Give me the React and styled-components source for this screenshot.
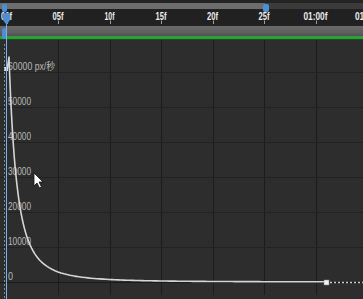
import React from "react";
import styled, { createGlobalStyle } from "styled-components";

const Global = createGlobalStyle`
  html, body { margin: 0; padding: 0; background: #2c2c2c; }
  #root { width: 363px; height: 299px; overflow: hidden; }
`;

const Panel = styled.div`
  position: relative;
  width: 363px;
  height: 299px;
  display: flex;
  flex-direction: column;
  background: #2c2c2c;
  overflow: hidden;
  font-family: "Liberation Sans", Arial, sans-serif;
`;

const TopStrip = styled.div`
  height: 4px;
  background: #242424;
`;

const Navigator = styled.div`
  height: 7px;
  display: flex;
`;

const NavSegment = styled.div`
  height: 100%;
  width: ${(p) => (p.$w ? `${p.$w}px` : "auto")};
  flex: ${(p) => (p.$w ? "none" : "1")};
  background: ${(p) => p.$bg};
`;

const Ruler = styled.div`
  height: 17px;
  background: #212121;
`;

const WorkArea = styled.div`
  height: 12px;
  background: linear-gradient(#6a6a6a, #5e5e5e 70%, #505050);
`;

const GreenBar = styled.div`
  height: 3px;
  background: #2f9e3a;
  border-bottom: 1px solid #174d1c;
`;

const Graph = styled.div`
  flex: 1;
  background: #2d2d2d;
`;

const Overlay = styled.svg`
  position: absolute;
  left: 0;
  top: 0;
  pointer-events: none;
`;

const Handle = styled.div`
  position: absolute;
  left: ${(p) => p.$x}px;
  top: ${(p) => p.$y}px;
  width: ${(p) => p.$w}px;
  height: ${(p) => p.$h}px;
  border-radius: 2px;
  background: #4b8fd6;
`;

const FRAME0 = 6.5;
const STEP = 51.5;

const rulerLabels = [
  { t: "00f", w: 11 },
  { t: "05f", w: 11 },
  { t: "10f", w: 10 },
  { t: "15f", w: 11 },
  { t: "20f", w: 11 },
  { t: "25f", w: 11 },
  { t: "01:00f", w: 24 },
  { t: "01:05f", w: 24 },
];
const gridValues = [60000, 50000, 40000, 30000, 20000, 10000, 0];
const lineY = (i) => 32 + i * 35; // relative to graph top (43)

function buildCurve() {
  const A = 64286;
  const b = 0.0502;
  const pts = ["M7 30", "L9 17"];
  for (let x = 9; x <= 326; x += x < 40 ? 0.5 : 3) {
    const v = A / Math.pow(1 + b * (x - 9), 2.5);
    const y = 242 - (v / 10000) * 35;
    pts.push(`L${x.toFixed(1)} ${y.toFixed(2)}`);
  }
  pts.push("L326 242");
  return pts.join(" ");
}

function labelWidth(i) {
  if (i === 0) return 47;
  if (i === 6) return 5;
  return 23;
}

export default function App() {
  const curve = buildCurve();
  return (
    <>
      <Global />
      <Panel>
        <TopStrip />
        <Navigator>
          <NavSegment $w={265} $bg="#6d6d6d" />
          <NavSegment $bg="#3b3b3b" />
        </Navigator>
        <Ruler>
          <svg width="363" height="17">
            {rulerLabels.map((l, i) => {
              const x = FRAME0 + STEP * i;
              return (
                <g key={l.t}>
                  <text
                    x={x - l.w / 2}
                    y="10.8"
                    textLength={l.w}
                    lengthAdjust="spacingAndGlyphs"
                    fill="#ececec"
                    fontSize="10.5"
                    fontWeight="bold"
                    fontFamily="'Liberation Sans', Arial, sans-serif"
                  >
                    {l.t}
                  </text>
                  <line x1={Math.round(x) + 0.5} x2={Math.round(x) + 0.5} y1="11.5" y2="15" stroke="#a0a0a0" />
                </g>
              );
            })}
          </svg>
        </Ruler>
        <WorkArea />
        <GreenBar />
        <Graph>
          <svg width="363" height="255">
            {[1, 2, 3, 4, 5, 6].map((k) => {
              const x = Math.round(FRAME0 + STEP * k) + 0.5;
              return <line key={k} x1={x} x2={x} y1="0" y2="255" stroke="#1c1c1c" />;
            })}
            {gridValues.map((v, i) => (
              <line
                key={v}
                x1="0"
                x2="363"
                y1={lineY(i) + 0.5}
                y2={lineY(i) + 0.5}
                stroke={v === 0 ? "#1a1a1a" : "#222222"}
              />
            ))}
            {gridValues.map((v, i) => (
              <text
                key={"t" + v}
                x="8"
                y={lineY(i) - 2.5}
                textLength={labelWidth(i)}
                lengthAdjust="spacingAndGlyphs"
                fill="#b8b8b8"
                fontSize="10"
                fontFamily="'Liberation Sans', 'Noto Sans CJK JP', sans-serif"
              >
                {i === 0 ? "60000 px/秒" : String(v)}
              </text>
            ))}
            <path d={curve} fill="none" stroke="#d6d6d6" strokeWidth="1.6" strokeLinejoin="round" />
            <rect x="4" y="27" width="4" height="4" fill="#e0e0e0" />
            <rect x="324" y="240" width="5" height="5" fill="#f0f0f0" stroke="#888" strokeWidth="0.5" />
            <line x1="330" x2="363" y1="242.5" y2="242.5" stroke="#c8c8c8" strokeWidth="1.4" strokeDasharray="2 2" />
          </svg>
        </Graph>

        <Handle $x={2} $y={4} $w={5} $h={8} />
        <Handle $x={263} $y={4} $w={6} $h={8} />
        <Handle $x={2} $y={28} $w={5} $h={11} />

        <Overlay width="363" height="299">
          <line x1="6.5" x2="6.5" y1="24" y2="299" stroke="#7fb1e6" strokeWidth="1" />
          <line x1="4.5" x2="4.5" y1="44" y2="299" stroke="#8aa6c4" strokeWidth="1" strokeDasharray="2 2" opacity="0.8" />
          <path d="M3 14 Q3 13 4 13 L9 13 Q10 13 10 14 L10 20 L6.5 25 L3 20 Z" fill="#4b8fd6" />
          <path
            d="M34 173 L34 186 L37 183 L39.5 188 L41.5 187 L39 182 L43 182 Z"
            fill="#ffffff"
            stroke="#111"
            strokeWidth="0.8"
            strokeLinejoin="round"
          />
        </Overlay>
      </Panel>
    </>
  );
}
